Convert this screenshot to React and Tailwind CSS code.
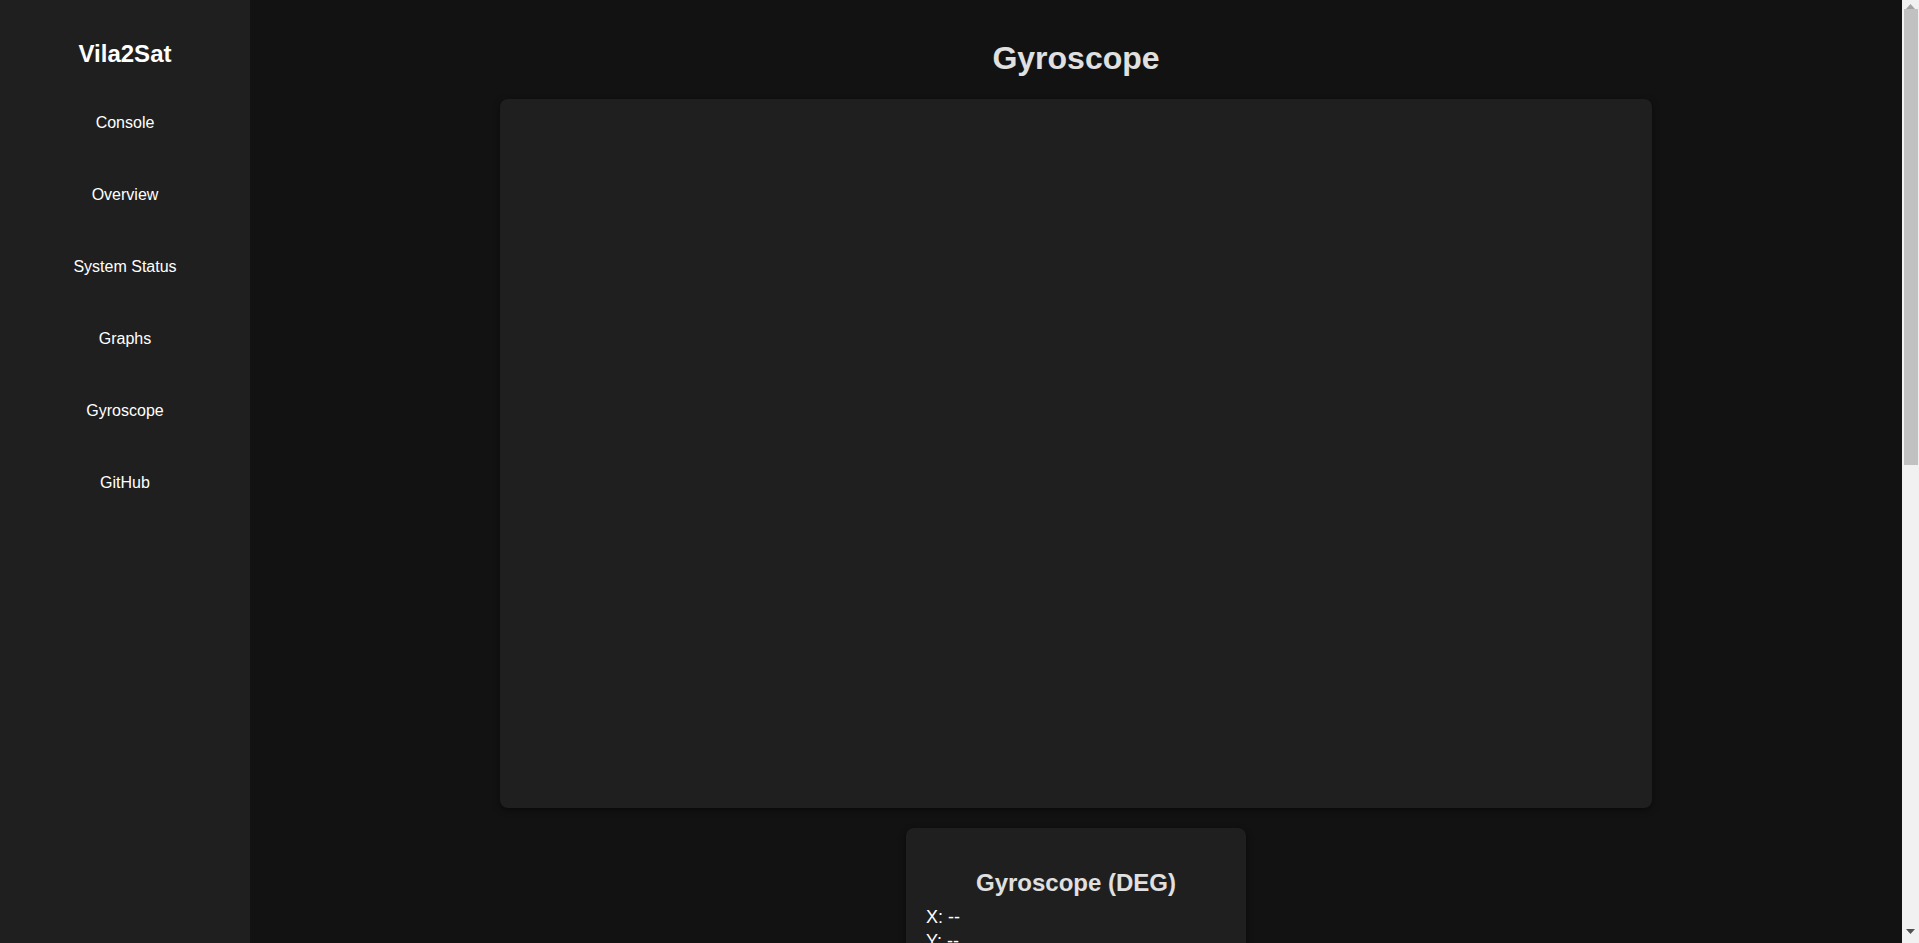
import React from "react";

const navItems = ["Console", "Overview", "System Status", "Graphs", "Gyroscope", "GitHub"];

function Scrollbar() {
  return (
    <div className="flex h-full w-[17px] shrink-0 flex-col bg-[#f1f1f1]">
      <div className="flex h-[9px] items-start justify-center pt-[4px]">
        <svg width="9" height="5" viewBox="0 0 9 5">
          <path d="M4.5 0 L9 5 L0 5 Z" fill="#a3a3a3" />
        </svg>
      </div>
      <div className="ml-[2px] mr-[1px] h-[456px] bg-[#c1c1c1]"></div>
      <div className="flex-1"></div>
      <div className="flex h-[14px] items-start justify-center">
        <svg width="9" height="5" viewBox="0 0 9 5">
          <path d="M0 0 L9 0 L4.5 5 Z" fill="#505050" />
        </svg>
      </div>
    </div>
  );
}

export default function App() {
  return (
    <div
      className="flex h-screen w-full bg-[#121212] text-[#e0e0e0]"
      style={{ fontFamily: '"Liberation Sans", Arial, sans-serif' }}
    >
      <aside className="flex h-full w-[250px] shrink-0 flex-col bg-[#1f1f1f] pt-[40px]">
        <h2 className="text-center text-[24px] font-bold leading-[1.15] text-white">Vila2Sat</h2>
        <ul className="mt-[20px] flex flex-col">
          {navItems.map((item) => (
            <li key={item} className="flex h-[72px] items-center justify-center">
              <a href="#" className="text-[16px] leading-[1.15] text-white">
                {item}
              </a>
            </li>
          ))}
        </ul>
      </aside>
      <main className="flex-1 overflow-hidden px-5 pt-[40px] pb-10">
        <h1 className="mb-[22px] text-center text-[32px] font-bold leading-[1.15] text-[#e0e0e0]">
          Gyroscope
        </h1>
        <div className="mx-auto h-[709px] w-full max-w-[1152px] rounded-lg bg-[#1f1f1f] shadow-[0_2px_6px_rgba(0,0,0,0.5)]"></div>
        <div className="mx-auto mt-[20px] w-[340px] rounded-lg bg-[#1f1f1f] px-5 pt-5 pb-5 shadow-[0_2px_6px_rgba(0,0,0,0.5)]">
          <h3 className="mt-[21px] mb-[9px] text-center text-[24px] font-bold leading-[1.15] text-[#e0e0e0]">
            Gyroscope (DEG)
          </h3>
          <p className="text-[18px] leading-[24px] text-white">X: --</p>
          <p className="text-[18px] leading-[24px] text-white">Y: --</p>
          <p className="text-[18px] leading-[24px] text-white">Z: --</p>
        </div>
      </main>
      <Scrollbar />
    </div>
  );
}
